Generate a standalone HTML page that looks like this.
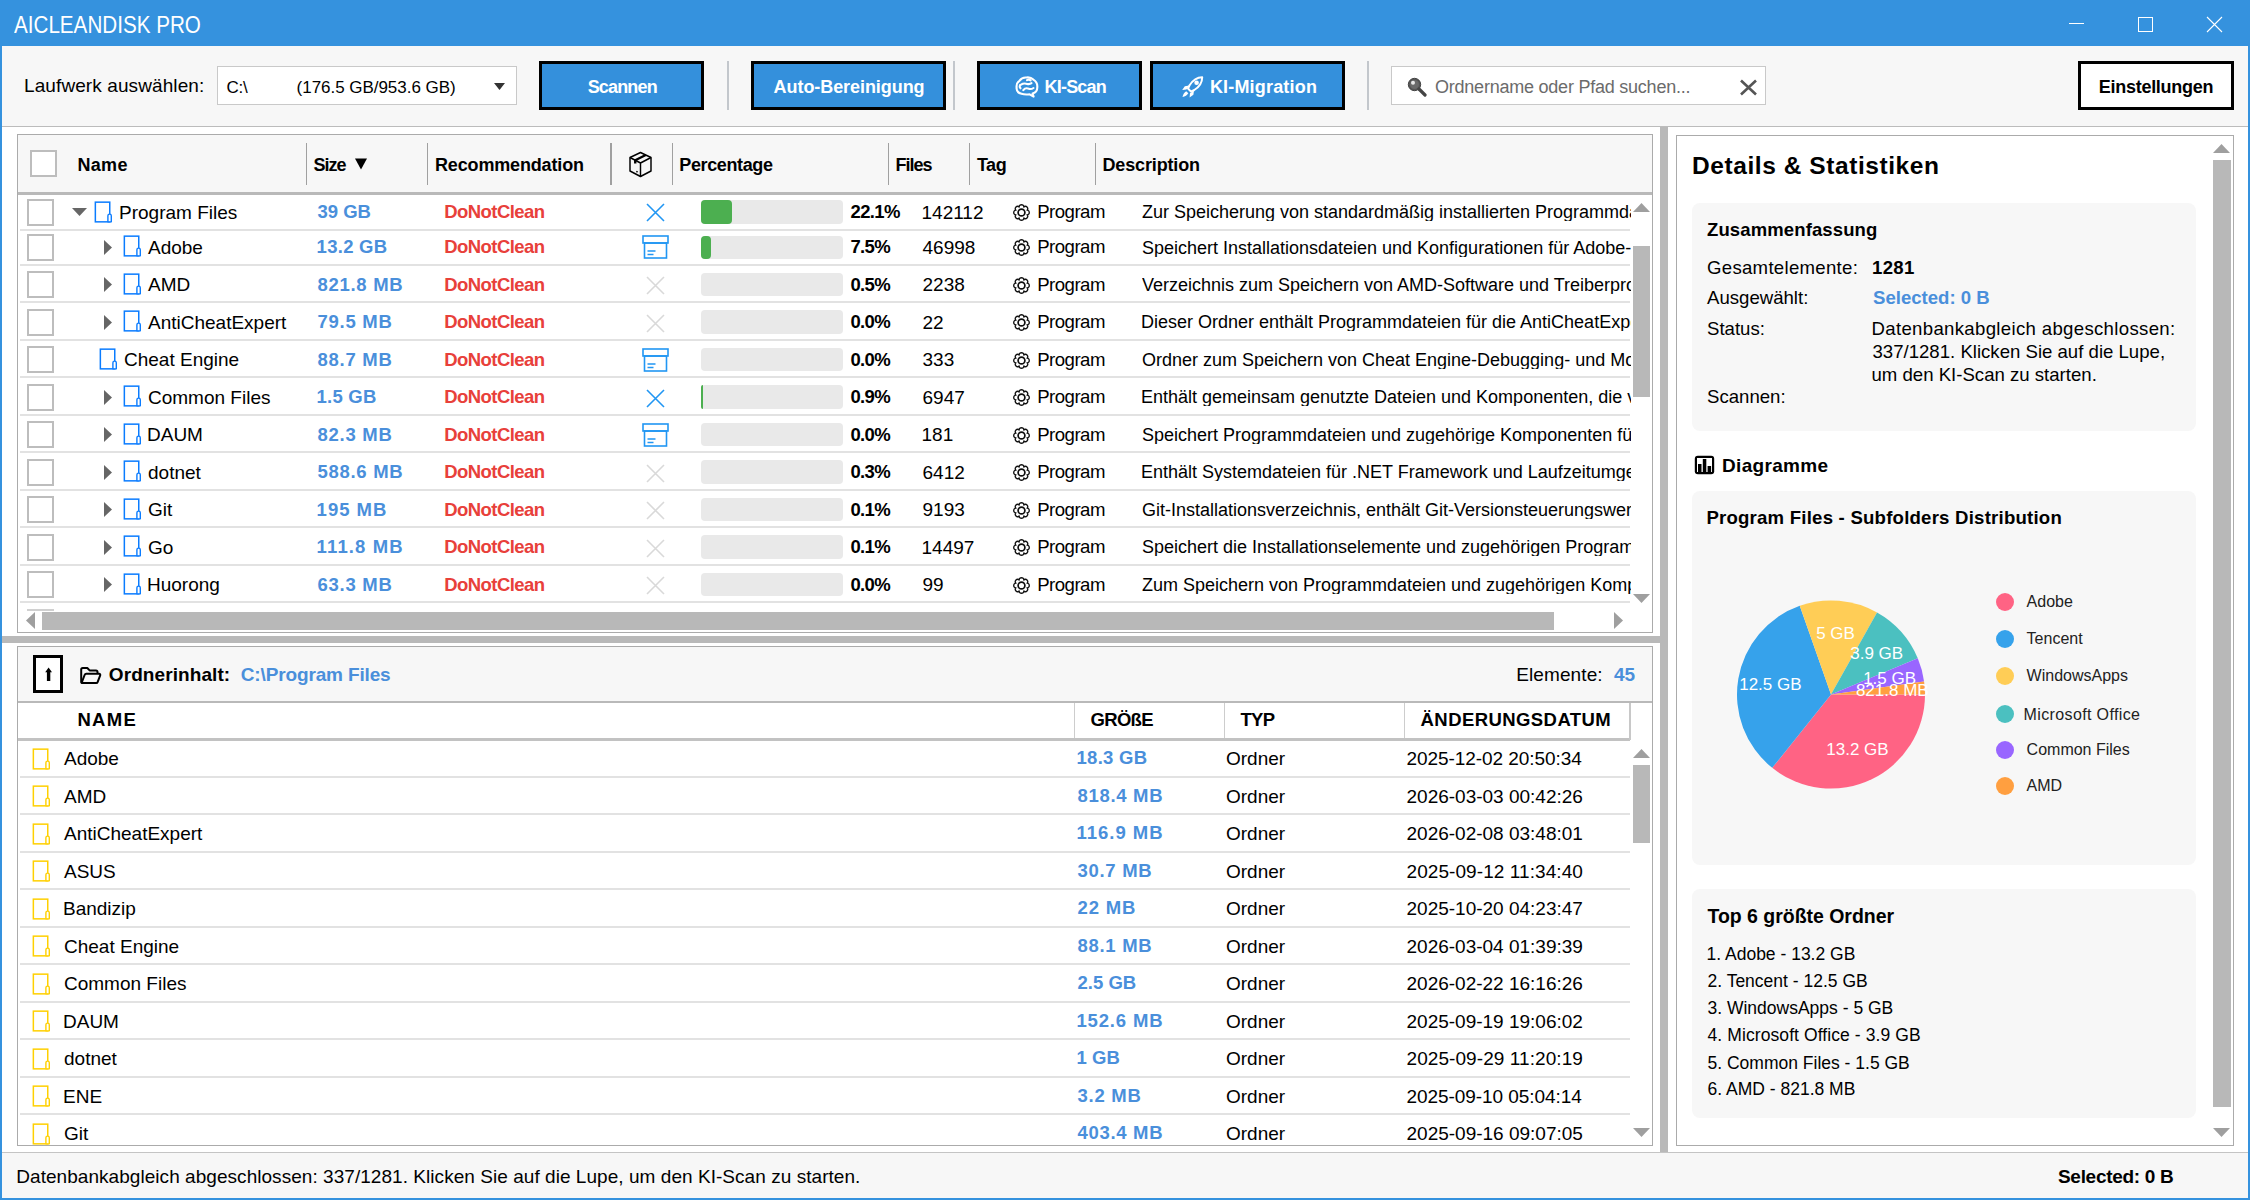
<!DOCTYPE html>
<html><head><meta charset="utf-8"><title>AICLEANDISK PRO</title>
<style>
html,body{margin:0;padding:0;width:2250px;height:1200px;overflow:hidden;background:#fff}
body{position:relative;font-family:"Liberation Sans", sans-serif;}
body>div,body>svg{position:absolute;white-space:pre;}
</style></head><body>
<div style="left:0px;top:0px;width:2250px;height:46px;background:#3592de"></div>
<div style="left:0px;top:46px;width:2px;height:1154px;background:#3592de"></div>
<div style="left:2248px;top:46px;width:2px;height:1154px;background:#3592de"></div>
<div style="left:0px;top:1198px;width:2250px;height:2px;background:#3592de"></div>
<div style="left:14.4px;top:13.92px;font-size:23.5px;line-height:23.5px;color:#fff;transform:scaleX(0.8778);transform-origin:0 0;">AICLEANDISK PRO</div>
<div style="left:2069px;top:23px;width:15px;height:1px;background:#fff"></div>
<div style="left:2138px;top:17px;width:15px;height:15px;border:1px solid #fff;box-sizing:border-box"></div>
<svg style="left:2206px;top:16px;" width="17" height="17" viewBox="0 0 17 17"><path d="M1 1L16 16M16 1L1 16" stroke="#fff" stroke-width="1.1"/></svg>
<div style="left:2px;top:46px;width:2246px;height:80px;background:#f7f7f7"></div>
<div style="left:2px;top:126px;width:2246px;height:1px;background:#bcbcbc"></div>
<div style="left:24px;top:75.68px;font-size:19px;line-height:19px;color:#000;letter-spacing:0.099px;">Laufwerk auswählen:</div>
<div style="left:217px;top:66px;width:300px;height:39px;background:#fff;border:1px solid #c9c9c9;box-sizing:border-box"></div>
<div style="left:226.4px;top:79.04px;font-size:17px;line-height:17px;color:#000;letter-spacing:-0.200px;">C:\</div>
<div style="left:296.6px;top:79.04px;font-size:17px;line-height:17px;color:#000;letter-spacing:-0.035px;">(176.5 GB/953.6 GB)</div>
<svg style="left:494px;top:82.5px;" width="11" height="7" viewBox="0 0 11 7"><path d="M0 0H11L5.5 7Z" fill="#333"/></svg>
<div style="left:539px;top:61px;width:165px;height:49px;background:#3490dc;border:3px solid #000;box-sizing:border-box"></div>
<div style="left:587.7px;top:77.86px;font-size:18px;line-height:18px;font-weight:700;color:#fff;letter-spacing:-0.838px;">Scannen</div>
<div style="left:727px;top:61px;width:2px;height:49px;background:#c3c7cc"></div>
<div style="left:751px;top:61px;width:195px;height:49px;background:#3490dc;border:3px solid #000;box-sizing:border-box"></div>
<div style="left:773.6px;top:77.86px;font-size:18px;line-height:18px;font-weight:700;color:#fff;letter-spacing:-0.066px;">Auto-Bereinigung</div>
<div style="left:953px;top:61px;width:2px;height:49px;background:#c3c7cc"></div>
<div style="left:977px;top:61px;width:165px;height:49px;background:#3490dc;border:3px solid #000;box-sizing:border-box"></div>
<div style="left:1044.5px;top:77.86px;font-size:18px;line-height:18px;font-weight:700;color:#fff;letter-spacing:-0.787px;">KI-Scan</div>
<div style="left:1150px;top:61px;width:195px;height:49px;background:#3490dc;border:3px solid #000;box-sizing:border-box"></div>
<div style="left:1209.9px;top:77.86px;font-size:18px;line-height:18px;font-weight:700;color:#fff;letter-spacing:0.183px;">KI-Migration</div>
<div style="left:1367px;top:61px;width:2px;height:49px;background:#c3c7cc"></div>
<svg style="left:1015px;top:75.5px;" width="24" height="22" viewBox="0 0 24 22"><g fill="none" stroke="#fff" stroke-width="2.1" stroke-linecap="round" stroke-linejoin="round">
<path d="M6.5 17.8C3.2 17 1.3 14.3 1.6 11.2C1.3 8.5 2.6 6 4.6 4.6C6 2.4 8.6 1.3 11.5 1.5C13.8 1.2 16.5 1.8 18.3 3.6C20.8 5 22.5 7.8 22.3 11C22.4 14.2 20.5 16.8 17.6 17.6L18.6 20.6L14.6 18.3C12 18.6 9 18.6 6.5 17.8Z"/>
<path d="M6 8.6C7.6 7.6 10 7.3 12.2 7.9C13.8 8.3 15.2 8.1 16.5 7.2"/>
<path d="M8.3 14.2C9.6 12.5 12 12 13.8 12.7C15.3 13.3 17 13 18.5 12"/>
<path d="M12 4.2C13 3.6 14.6 3.6 15.6 4.3M5.5 12.3C4.6 11.3 4.5 10 5 9"/>
</g></svg>
<svg style="left:1181px;top:75.5px;" width="23" height="22" viewBox="0 0 23 22"><g fill="none" stroke="#fff" stroke-width="2" stroke-linejoin="round">
<path d="M21.2 1.2C16.5 1.3 11.8 4.2 8.6 9.2L7 12.5L10 15.6L13.3 14C18.3 10.8 21.2 6.2 21.2 1.2Z"/>
</g>
<circle cx="15.6" cy="6.8" r="2.3" fill="#fff"/>
<path d="M8.2 9.5L3.8 10.2L1.2 14L5.5 13.6ZM13 14.6L12.4 18.8L8.6 21.4L9 17.2Z" fill="#fff"/>
<path d="M5.2 15.2C3.4 16.2 2 18.6 1.5 21C3.9 20.5 6.3 19.2 7.3 17.3Z" fill="#fff"/></svg>
<div style="left:1391px;top:66px;width:375px;height:39px;background:#fff;border:1px solid #c9c9c9;box-sizing:border-box"></div>
<svg style="left:1407px;top:77px;" width="20" height="20" viewBox="0 0 20 20"><circle cx="7.5" cy="7.5" r="6.2" fill="#555" stroke="#444" stroke-width="1"/>
<circle cx="7.5" cy="7.5" r="4.5" fill="#6a6a6a"/>
<circle cx="6" cy="5.8" r="2" fill="#e8e8e8"/>
<path d="M12 12L18 18" stroke="#444" stroke-width="3.2" stroke-linecap="round"/></svg>
<div style="left:1435px;top:78.36px;font-size:18px;line-height:18px;color:#6b6b6b;letter-spacing:-0.229px;">Ordnername oder Pfad suchen...</div>
<svg style="left:1739px;top:78.5px;" width="19" height="17" viewBox="0 0 19 17"><path d="M2 1.5L17 15.5M17 1.5L2 15.5" stroke="#555" stroke-width="2.6"/></svg>
<div style="left:2078px;top:61px;width:156px;height:49px;background:#fff;border:3px solid #000;box-sizing:border-box"></div>
<div style="left:2098.75px;top:77.86px;font-size:18px;line-height:18px;font-weight:700;color:#000;letter-spacing:-0.272px;">Einstellungen</div>
<div style="left:2px;top:127px;width:2246px;height:1025px;background:#fff"></div>
<div style="left:1660px;top:127px;width:8px;height:1025px;background:#b9b9b9"></div>
<div style="left:2px;top:636px;width:1658px;height:7px;background:#b9b9b9"></div>
<div style="left:17px;top:134px;width:1636px;height:499px;border:1px solid #ababab;box-sizing:border-box;background:#fff"></div>
<div style="left:18px;top:135px;width:1634px;height:57px;background:#f7f7f7"></div>
<div style="left:18px;top:192px;width:1634px;height:3px;background:#b9b9b9"></div>
<div style="left:30px;top:150px;width:27px;height:27px;background:#fff;border:2px solid #bdbdbd;box-sizing:border-box"></div>
<div style="left:77.4px;top:156.11px;font-size:18px;line-height:18px;font-weight:700;color:#000;letter-spacing:0.328px;">Name</div>
<div style="left:313.5px;top:156.11px;font-size:18px;line-height:18px;font-weight:700;color:#000;letter-spacing:-1.002px;">Size</div>
<svg style="left:355px;top:158px;" width="12" height="12" viewBox="0 0 12 12"><path d="M0 0.5H12L6 11.5Z" fill="#000"/></svg>
<div style="left:435px;top:156.11px;font-size:18px;line-height:18px;font-weight:700;color:#000;letter-spacing:-0.156px;">Recommendation</div>
<div style="left:679.3px;top:156.11px;font-size:18px;line-height:18px;font-weight:700;color:#000;letter-spacing:-0.371px;">Percentage</div>
<div style="left:895.5px;top:156.11px;font-size:18px;line-height:18px;font-weight:700;color:#000;letter-spacing:-1.002px;">Files</div>
<div style="left:976.9px;top:156.11px;font-size:18px;line-height:18px;font-weight:700;color:#000;letter-spacing:-0.435px;">Tag</div>
<div style="left:1102.5px;top:156.11px;font-size:18px;line-height:18px;font-weight:700;color:#000;letter-spacing:-0.152px;">Description</div>
<div style="left:305.5px;top:143px;width:1.5px;height:42px;background:#a0a0a0"></div>
<div style="left:426.5px;top:143px;width:1.5px;height:42px;background:#a0a0a0"></div>
<div style="left:610px;top:143px;width:1.5px;height:42px;background:#a0a0a0"></div>
<div style="left:671.5px;top:143px;width:1.5px;height:42px;background:#a0a0a0"></div>
<div style="left:887.5px;top:143px;width:1.5px;height:42px;background:#a0a0a0"></div>
<div style="left:968.5px;top:143px;width:1.5px;height:42px;background:#a0a0a0"></div>
<div style="left:1094.5px;top:143px;width:1.5px;height:42px;background:#a0a0a0"></div>
<svg style="left:628px;top:151px;" width="25" height="27" viewBox="0 0 25 27"><g fill="none" stroke="#000" stroke-width="1.45" stroke-linejoin="round">
<path d="M12.5 1.5L23 6.5V20L12.5 25.5L2 20V6.5Z"/>
<path d="M2 6.5L12.5 12L23 6.5M12.5 12V25.5"/>
<path d="M17.75 4L7.25 9.25V12.5" stroke-width="2.4"/>
</g><path d="M8.3 20.3L9.6 21" stroke="#000" stroke-width="1.5"/></svg>
<div style="left:27px;top:198.5px;width:27px;height:27px;background:#fff;border:2px solid #bdbdbd;box-sizing:border-box"></div>
<svg style="left:72px;top:208px;" width="15" height="8" viewBox="0 0 15 8"><path d="M0 0H15L7.5 8Z" fill="#666"/></svg>
<svg style="left:94px;top:200.5px;" width="18" height="22" viewBox="0 0 18 22"><rect x="1.35" y="1.15" width="14.4" height="19.7" fill="none" stroke="#0a7cff" stroke-width="1.5"/>
<path d="M13.9 20.85V14.7C13.9 13.7 14.5 13.1 15.6 13.1C16.7 13.1 17.3 13.7 17.3 14.7V20.85Z" fill="#fff" stroke="#0a7cff" stroke-width="1.4" stroke-linejoin="round"/></svg>
<div style="left:119px;top:202.88px;font-size:19px;line-height:19px;color:#000;">Program Files</div>
<div style="left:317.6px;top:203.12px;font-size:18.5px;line-height:18.5px;font-weight:700;color:#4a8fdb;letter-spacing:-0.052px;">39 GB</div>
<div style="left:444.2px;top:203.12px;font-size:18.5px;line-height:18.5px;font-weight:700;color:#e8403a;letter-spacing:-0.551px;">DoNotClean</div>
<svg style="left:646px;top:203.4px;" width="19" height="19" viewBox="0 0 19 19"><path d="M1 1L18 18M18 1L1 18" stroke="#2196f3" stroke-width="1.6"/></svg>
<div style="left:701.2px;top:200.3px;width:141.6px;height:23.5px;background:#e9e9e9;border-radius:4px"></div>
<div style="left:701.2px;top:200.3px;width:30.7px;height:23.5px;background:#4caf50;border-radius:4px"></div>
<div style="left:850.5px;top:203.12px;font-size:18.5px;line-height:18.5px;font-weight:700;color:#000;letter-spacing:-0.652px;">22.1%</div>
<div style="left:921.5px;top:202.88px;font-size:19px;line-height:19px;color:#000;">142112</div>
<svg style="left:1011.5px;top:203.2px;" width="19" height="19" viewBox="0 0 19 19"><g fill="none" stroke="#111" stroke-width="1.35" stroke-linejoin="round">
<path d="M7.20 3.96C6.90 0.99 12.10 0.99 11.80 3.96C13.68 1.64 17.36 5.32 15.04 7.20C18.01 6.90 18.01 12.10 15.04 11.80C17.36 13.68 13.68 17.36 11.80 15.04C12.10 18.01 6.90 18.01 7.20 15.04C5.32 17.36 1.64 13.68 3.96 11.80C0.99 12.10 0.99 6.90 3.96 7.20C1.64 5.32 5.32 1.64 7.20 3.96Z"/>
<circle cx="9.5" cy="9.5" r="3.4" stroke-width="1.7"/></g></svg>
<div style="left:1037.2px;top:203.07px;font-size:18.6px;line-height:18.6px;color:#000;letter-spacing:-0.518px;">Program</div>
<div style="left:1141.9px;top:203.36px;font-size:18px;line-height:18px;color:#000;width:489.1px;overflow:hidden;">Zur Speicherung von standardmäßig installierten Programmdateien und Komponenten</div>
<div style="left:27px;top:233.7px;width:27px;height:27px;background:#fff;border:2px solid #bdbdbd;box-sizing:border-box"></div>
<svg style="left:104px;top:239.7px;" width="8" height="15" viewBox="0 0 8 15"><path d="M0 0L8 7.5L0 15Z" fill="#666"/></svg>
<svg style="left:122.5px;top:235.2px;" width="18" height="22" viewBox="0 0 18 22"><rect x="1.35" y="1.15" width="14.4" height="19.7" fill="none" stroke="#0a7cff" stroke-width="1.5"/>
<path d="M13.9 20.85V14.7C13.9 13.7 14.5 13.1 15.6 13.1C16.7 13.1 17.3 13.7 17.3 14.7V20.85Z" fill="#fff" stroke="#0a7cff" stroke-width="1.4" stroke-linejoin="round"/></svg>
<div style="left:148px;top:238.08px;font-size:19px;line-height:19px;color:#000;">Adobe</div>
<div style="left:316.6px;top:238.32px;font-size:18.5px;line-height:18.5px;font-weight:700;color:#4a8fdb;letter-spacing:0.277px;">13.2 GB</div>
<div style="left:444.2px;top:238.32px;font-size:18.5px;line-height:18.5px;font-weight:700;color:#e8403a;letter-spacing:-0.551px;">DoNotClean</div>
<svg style="left:642px;top:235.2px;" width="27" height="24" viewBox="0 0 27 24"><g fill="none" stroke="#2196f3" stroke-width="1.6">
<rect x="1" y="1" width="25" height="7"/><rect x="2.5" y="8" width="22" height="15"/></g>
<path d="M5.5 16H13.5M5.5 19.5H11.5" stroke="#2196f3" stroke-width="1.6"/></svg>
<div style="left:701.2px;top:235.5px;width:141.6px;height:23.5px;background:#e9e9e9;border-radius:4px"></div>
<div style="left:701.2px;top:235.5px;width:9.5px;height:23.5px;background:#4caf50;border-radius:4px"></div>
<div style="left:850.5px;top:238.32px;font-size:18.5px;line-height:18.5px;font-weight:700;color:#000;letter-spacing:-0.673px;">7.5%</div>
<div style="left:922.5px;top:238.08px;font-size:19px;line-height:19px;color:#000;">46998</div>
<svg style="left:1011.5px;top:238.4px;" width="19" height="19" viewBox="0 0 19 19"><g fill="none" stroke="#111" stroke-width="1.35" stroke-linejoin="round">
<path d="M7.20 3.96C6.90 0.99 12.10 0.99 11.80 3.96C13.68 1.64 17.36 5.32 15.04 7.20C18.01 6.90 18.01 12.10 15.04 11.80C17.36 13.68 13.68 17.36 11.80 15.04C12.10 18.01 6.90 18.01 7.20 15.04C5.32 17.36 1.64 13.68 3.96 11.80C0.99 12.10 0.99 6.90 3.96 7.20C1.64 5.32 5.32 1.64 7.20 3.96Z"/>
<circle cx="9.5" cy="9.5" r="3.4" stroke-width="1.7"/></g></svg>
<div style="left:1037.2px;top:238.27px;font-size:18.6px;line-height:18.6px;color:#000;letter-spacing:-0.518px;">Program</div>
<div style="left:1141.9px;top:238.56px;font-size:18px;line-height:18px;color:#000;width:489.1px;overflow:hidden;">Speichert Installationsdateien und Konfigurationen für Adobe-Software und Anwendungen</div>
<div style="left:27px;top:271.1px;width:27px;height:27px;background:#fff;border:2px solid #bdbdbd;box-sizing:border-box"></div>
<svg style="left:104px;top:277.1px;" width="8" height="15" viewBox="0 0 8 15"><path d="M0 0L8 7.5L0 15Z" fill="#666"/></svg>
<svg style="left:122.5px;top:272.6px;" width="18" height="22" viewBox="0 0 18 22"><rect x="1.35" y="1.15" width="14.4" height="19.7" fill="none" stroke="#0a7cff" stroke-width="1.5"/>
<path d="M13.9 20.85V14.7C13.9 13.7 14.5 13.1 15.6 13.1C16.7 13.1 17.3 13.7 17.3 14.7V20.85Z" fill="#fff" stroke="#0a7cff" stroke-width="1.4" stroke-linejoin="round"/></svg>
<div style="left:148px;top:275.48px;font-size:19px;line-height:19px;color:#000;">AMD</div>
<div style="left:317.6px;top:275.72px;font-size:18.5px;line-height:18.5px;font-weight:700;color:#4a8fdb;letter-spacing:0.693px;">821.8 MB</div>
<div style="left:444.2px;top:275.72px;font-size:18.5px;line-height:18.5px;font-weight:700;color:#e8403a;letter-spacing:-0.551px;">DoNotClean</div>
<svg style="left:646px;top:276px;" width="19" height="19" viewBox="0 0 19 19"><path d="M1 1L18 18M18 1L1 18" stroke="#d9d9d9" stroke-width="1.6"/></svg>
<div style="left:701.2px;top:272.9px;width:141.6px;height:23.5px;background:#e9e9e9;border-radius:4px"></div>
<div style="left:850.5px;top:275.72px;font-size:18.5px;line-height:18.5px;font-weight:700;color:#000;letter-spacing:-0.673px;">0.5%</div>
<div style="left:922.5px;top:275.48px;font-size:19px;line-height:19px;color:#000;">2238</div>
<svg style="left:1011.5px;top:275.8px;" width="19" height="19" viewBox="0 0 19 19"><g fill="none" stroke="#111" stroke-width="1.35" stroke-linejoin="round">
<path d="M7.20 3.96C6.90 0.99 12.10 0.99 11.80 3.96C13.68 1.64 17.36 5.32 15.04 7.20C18.01 6.90 18.01 12.10 15.04 11.80C17.36 13.68 13.68 17.36 11.80 15.04C12.10 18.01 6.90 18.01 7.20 15.04C5.32 17.36 1.64 13.68 3.96 11.80C0.99 12.10 0.99 6.90 3.96 7.20C1.64 5.32 5.32 1.64 7.20 3.96Z"/>
<circle cx="9.5" cy="9.5" r="3.4" stroke-width="1.7"/></g></svg>
<div style="left:1037.2px;top:275.67px;font-size:18.6px;line-height:18.6px;color:#000;letter-spacing:-0.518px;">Program</div>
<div style="left:1141.9px;top:275.96px;font-size:18px;line-height:18px;color:#000;width:489.1px;overflow:hidden;">Verzeichnis zum Speichern von AMD-Software und Treiberprogrammen</div>
<div style="left:27px;top:308.6px;width:27px;height:27px;background:#fff;border:2px solid #bdbdbd;box-sizing:border-box"></div>
<svg style="left:104px;top:314.6px;" width="8" height="15" viewBox="0 0 8 15"><path d="M0 0L8 7.5L0 15Z" fill="#666"/></svg>
<svg style="left:122.5px;top:310.1px;" width="18" height="22" viewBox="0 0 18 22"><rect x="1.35" y="1.15" width="14.4" height="19.7" fill="none" stroke="#0a7cff" stroke-width="1.5"/>
<path d="M13.9 20.85V14.7C13.9 13.7 14.5 13.1 15.6 13.1C16.7 13.1 17.3 13.7 17.3 14.7V20.85Z" fill="#fff" stroke="#0a7cff" stroke-width="1.4" stroke-linejoin="round"/></svg>
<div style="left:148px;top:312.98px;font-size:19px;line-height:19px;color:#000;">AntiCheatExpert</div>
<div style="left:317.6px;top:313.22px;font-size:18.5px;line-height:18.5px;font-weight:700;color:#4a8fdb;letter-spacing:0.707px;">79.5 MB</div>
<div style="left:444.2px;top:313.22px;font-size:18.5px;line-height:18.5px;font-weight:700;color:#e8403a;letter-spacing:-0.551px;">DoNotClean</div>
<svg style="left:646px;top:313.5px;" width="19" height="19" viewBox="0 0 19 19"><path d="M1 1L18 18M18 1L1 18" stroke="#d9d9d9" stroke-width="1.6"/></svg>
<div style="left:701.2px;top:310.4px;width:141.6px;height:23.5px;background:#e9e9e9;border-radius:4px"></div>
<div style="left:850.5px;top:313.22px;font-size:18.5px;line-height:18.5px;font-weight:700;color:#000;letter-spacing:-0.673px;">0.0%</div>
<div style="left:922.5px;top:312.98px;font-size:19px;line-height:19px;color:#000;">22</div>
<svg style="left:1011.5px;top:313.3px;" width="19" height="19" viewBox="0 0 19 19"><g fill="none" stroke="#111" stroke-width="1.35" stroke-linejoin="round">
<path d="M7.20 3.96C6.90 0.99 12.10 0.99 11.80 3.96C13.68 1.64 17.36 5.32 15.04 7.20C18.01 6.90 18.01 12.10 15.04 11.80C17.36 13.68 13.68 17.36 11.80 15.04C12.10 18.01 6.90 18.01 7.20 15.04C5.32 17.36 1.64 13.68 3.96 11.80C0.99 12.10 0.99 6.90 3.96 7.20C1.64 5.32 5.32 1.64 7.20 3.96Z"/>
<circle cx="9.5" cy="9.5" r="3.4" stroke-width="1.7"/></g></svg>
<div style="left:1037.2px;top:313.17px;font-size:18.6px;line-height:18.6px;color:#000;letter-spacing:-0.518px;">Program</div>
<div style="left:1140.9px;top:313.46px;font-size:18px;line-height:18px;color:#000;width:490.1px;overflow:hidden;">Dieser Ordner enthält Programmdateien für die AntiCheatExpert-Software</div>
<div style="left:27px;top:346.1px;width:27px;height:27px;background:#fff;border:2px solid #bdbdbd;box-sizing:border-box"></div>
<svg style="left:98.5px;top:347.6px;" width="18" height="22" viewBox="0 0 18 22"><rect x="1.35" y="1.15" width="14.4" height="19.7" fill="none" stroke="#0a7cff" stroke-width="1.5"/>
<path d="M13.9 20.85V14.7C13.9 13.7 14.5 13.1 15.6 13.1C16.7 13.1 17.3 13.7 17.3 14.7V20.85Z" fill="#fff" stroke="#0a7cff" stroke-width="1.4" stroke-linejoin="round"/></svg>
<div style="left:124px;top:350.48px;font-size:19px;line-height:19px;color:#000;">Cheat Engine</div>
<div style="left:317.6px;top:350.72px;font-size:18.5px;line-height:18.5px;font-weight:700;color:#4a8fdb;letter-spacing:0.707px;">88.7 MB</div>
<div style="left:444.2px;top:350.72px;font-size:18.5px;line-height:18.5px;font-weight:700;color:#e8403a;letter-spacing:-0.551px;">DoNotClean</div>
<svg style="left:642px;top:347.6px;" width="27" height="24" viewBox="0 0 27 24"><g fill="none" stroke="#2196f3" stroke-width="1.6">
<rect x="1" y="1" width="25" height="7"/><rect x="2.5" y="8" width="22" height="15"/></g>
<path d="M5.5 16H13.5M5.5 19.5H11.5" stroke="#2196f3" stroke-width="1.6"/></svg>
<div style="left:701.2px;top:347.9px;width:141.6px;height:23.5px;background:#e9e9e9;border-radius:4px"></div>
<div style="left:850.5px;top:350.72px;font-size:18.5px;line-height:18.5px;font-weight:700;color:#000;letter-spacing:-0.673px;">0.0%</div>
<div style="left:922.5px;top:350.48px;font-size:19px;line-height:19px;color:#000;">333</div>
<svg style="left:1011.5px;top:350.8px;" width="19" height="19" viewBox="0 0 19 19"><g fill="none" stroke="#111" stroke-width="1.35" stroke-linejoin="round">
<path d="M7.20 3.96C6.90 0.99 12.10 0.99 11.80 3.96C13.68 1.64 17.36 5.32 15.04 7.20C18.01 6.90 18.01 12.10 15.04 11.80C17.36 13.68 13.68 17.36 11.80 15.04C12.10 18.01 6.90 18.01 7.20 15.04C5.32 17.36 1.64 13.68 3.96 11.80C0.99 12.10 0.99 6.90 3.96 7.20C1.64 5.32 5.32 1.64 7.20 3.96Z"/>
<circle cx="9.5" cy="9.5" r="3.4" stroke-width="1.7"/></g></svg>
<div style="left:1037.2px;top:350.67px;font-size:18.6px;line-height:18.6px;color:#000;letter-spacing:-0.518px;">Program</div>
<div style="left:1141.9px;top:350.96px;font-size:18px;line-height:18px;color:#000;width:489.1px;overflow:hidden;">Ordner zum Speichern von Cheat Engine-Debugging- und Modifikationswerkzeugen</div>
<div style="left:27px;top:383.6px;width:27px;height:27px;background:#fff;border:2px solid #bdbdbd;box-sizing:border-box"></div>
<svg style="left:104px;top:389.6px;" width="8" height="15" viewBox="0 0 8 15"><path d="M0 0L8 7.5L0 15Z" fill="#666"/></svg>
<svg style="left:122.5px;top:385.1px;" width="18" height="22" viewBox="0 0 18 22"><rect x="1.35" y="1.15" width="14.4" height="19.7" fill="none" stroke="#0a7cff" stroke-width="1.5"/>
<path d="M13.9 20.85V14.7C13.9 13.7 14.5 13.1 15.6 13.1C16.7 13.1 17.3 13.7 17.3 14.7V20.85Z" fill="#fff" stroke="#0a7cff" stroke-width="1.4" stroke-linejoin="round"/></svg>
<div style="left:148px;top:387.98px;font-size:19px;line-height:19px;color:#000;">Common Files</div>
<div style="left:316.6px;top:388.22px;font-size:18.5px;line-height:18.5px;font-weight:700;color:#4a8fdb;letter-spacing:0.211px;">1.5 GB</div>
<div style="left:444.2px;top:388.22px;font-size:18.5px;line-height:18.5px;font-weight:700;color:#e8403a;letter-spacing:-0.551px;">DoNotClean</div>
<svg style="left:646px;top:388.5px;" width="19" height="19" viewBox="0 0 19 19"><path d="M1 1L18 18M18 1L1 18" stroke="#2196f3" stroke-width="1.6"/></svg>
<div style="left:701.2px;top:385.4px;width:141.6px;height:23.5px;background:#e9e9e9;border-radius:4px"></div>
<div style="left:701.2px;top:385.4px;width:1.5px;height:23.5px;background:#4caf50;border-radius:3px 0 0 3px"></div>
<div style="left:850.5px;top:388.22px;font-size:18.5px;line-height:18.5px;font-weight:700;color:#000;letter-spacing:-0.673px;">0.9%</div>
<div style="left:922.5px;top:387.98px;font-size:19px;line-height:19px;color:#000;">6947</div>
<svg style="left:1011.5px;top:388.3px;" width="19" height="19" viewBox="0 0 19 19"><g fill="none" stroke="#111" stroke-width="1.35" stroke-linejoin="round">
<path d="M7.20 3.96C6.90 0.99 12.10 0.99 11.80 3.96C13.68 1.64 17.36 5.32 15.04 7.20C18.01 6.90 18.01 12.10 15.04 11.80C17.36 13.68 13.68 17.36 11.80 15.04C12.10 18.01 6.90 18.01 7.20 15.04C5.32 17.36 1.64 13.68 3.96 11.80C0.99 12.10 0.99 6.90 3.96 7.20C1.64 5.32 5.32 1.64 7.20 3.96Z"/>
<circle cx="9.5" cy="9.5" r="3.4" stroke-width="1.7"/></g></svg>
<div style="left:1037.2px;top:388.17px;font-size:18.6px;line-height:18.6px;color:#000;letter-spacing:-0.518px;">Program</div>
<div style="left:1140.9px;top:388.46px;font-size:18px;line-height:18px;color:#000;width:490.1px;overflow:hidden;">Enthält gemeinsam genutzte Dateien und Komponenten, die von mehreren Programmen</div>
<div style="left:27px;top:421.1px;width:27px;height:27px;background:#fff;border:2px solid #bdbdbd;box-sizing:border-box"></div>
<svg style="left:104px;top:427.1px;" width="8" height="15" viewBox="0 0 8 15"><path d="M0 0L8 7.5L0 15Z" fill="#666"/></svg>
<svg style="left:122.5px;top:422.6px;" width="18" height="22" viewBox="0 0 18 22"><rect x="1.35" y="1.15" width="14.4" height="19.7" fill="none" stroke="#0a7cff" stroke-width="1.5"/>
<path d="M13.9 20.85V14.7C13.9 13.7 14.5 13.1 15.6 13.1C16.7 13.1 17.3 13.7 17.3 14.7V20.85Z" fill="#fff" stroke="#0a7cff" stroke-width="1.4" stroke-linejoin="round"/></svg>
<div style="left:147px;top:425.48px;font-size:19px;line-height:19px;color:#000;">DAUM</div>
<div style="left:317.6px;top:425.72px;font-size:18.5px;line-height:18.5px;font-weight:700;color:#4a8fdb;letter-spacing:0.707px;">82.3 MB</div>
<div style="left:444.2px;top:425.72px;font-size:18.5px;line-height:18.5px;font-weight:700;color:#e8403a;letter-spacing:-0.551px;">DoNotClean</div>
<svg style="left:642px;top:422.6px;" width="27" height="24" viewBox="0 0 27 24"><g fill="none" stroke="#2196f3" stroke-width="1.6">
<rect x="1" y="1" width="25" height="7"/><rect x="2.5" y="8" width="22" height="15"/></g>
<path d="M5.5 16H13.5M5.5 19.5H11.5" stroke="#2196f3" stroke-width="1.6"/></svg>
<div style="left:701.2px;top:422.9px;width:141.6px;height:23.5px;background:#e9e9e9;border-radius:4px"></div>
<div style="left:850.5px;top:425.72px;font-size:18.5px;line-height:18.5px;font-weight:700;color:#000;letter-spacing:-0.673px;">0.0%</div>
<div style="left:921.5px;top:425.48px;font-size:19px;line-height:19px;color:#000;">181</div>
<svg style="left:1011.5px;top:425.8px;" width="19" height="19" viewBox="0 0 19 19"><g fill="none" stroke="#111" stroke-width="1.35" stroke-linejoin="round">
<path d="M7.20 3.96C6.90 0.99 12.10 0.99 11.80 3.96C13.68 1.64 17.36 5.32 15.04 7.20C18.01 6.90 18.01 12.10 15.04 11.80C17.36 13.68 13.68 17.36 11.80 15.04C12.10 18.01 6.90 18.01 7.20 15.04C5.32 17.36 1.64 13.68 3.96 11.80C0.99 12.10 0.99 6.90 3.96 7.20C1.64 5.32 5.32 1.64 7.20 3.96Z"/>
<circle cx="9.5" cy="9.5" r="3.4" stroke-width="1.7"/></g></svg>
<div style="left:1037.2px;top:425.67px;font-size:18.6px;line-height:18.6px;color:#000;letter-spacing:-0.518px;">Program</div>
<div style="left:1141.9px;top:425.96px;font-size:18px;line-height:18px;color:#000;width:489.1px;overflow:hidden;">Speichert Programmdateien und zugehörige Komponenten für DAUM-Software</div>
<div style="left:27px;top:458.6px;width:27px;height:27px;background:#fff;border:2px solid #bdbdbd;box-sizing:border-box"></div>
<svg style="left:104px;top:464.6px;" width="8" height="15" viewBox="0 0 8 15"><path d="M0 0L8 7.5L0 15Z" fill="#666"/></svg>
<svg style="left:122.5px;top:460.1px;" width="18" height="22" viewBox="0 0 18 22"><rect x="1.35" y="1.15" width="14.4" height="19.7" fill="none" stroke="#0a7cff" stroke-width="1.5"/>
<path d="M13.9 20.85V14.7C13.9 13.7 14.5 13.1 15.6 13.1C16.7 13.1 17.3 13.7 17.3 14.7V20.85Z" fill="#fff" stroke="#0a7cff" stroke-width="1.4" stroke-linejoin="round"/></svg>
<div style="left:148px;top:462.98px;font-size:19px;line-height:19px;color:#000;">dotnet</div>
<div style="left:317.6px;top:463.22px;font-size:18.5px;line-height:18.5px;font-weight:700;color:#4a8fdb;letter-spacing:0.693px;">588.6 MB</div>
<div style="left:444.2px;top:463.22px;font-size:18.5px;line-height:18.5px;font-weight:700;color:#e8403a;letter-spacing:-0.551px;">DoNotClean</div>
<svg style="left:646px;top:463.5px;" width="19" height="19" viewBox="0 0 19 19"><path d="M1 1L18 18M18 1L1 18" stroke="#d9d9d9" stroke-width="1.6"/></svg>
<div style="left:701.2px;top:460.4px;width:141.6px;height:23.5px;background:#e9e9e9;border-radius:4px"></div>
<div style="left:850.5px;top:463.22px;font-size:18.5px;line-height:18.5px;font-weight:700;color:#000;letter-spacing:-0.673px;">0.3%</div>
<div style="left:922.5px;top:462.98px;font-size:19px;line-height:19px;color:#000;">6412</div>
<svg style="left:1011.5px;top:463.3px;" width="19" height="19" viewBox="0 0 19 19"><g fill="none" stroke="#111" stroke-width="1.35" stroke-linejoin="round">
<path d="M7.20 3.96C6.90 0.99 12.10 0.99 11.80 3.96C13.68 1.64 17.36 5.32 15.04 7.20C18.01 6.90 18.01 12.10 15.04 11.80C17.36 13.68 13.68 17.36 11.80 15.04C12.10 18.01 6.90 18.01 7.20 15.04C5.32 17.36 1.64 13.68 3.96 11.80C0.99 12.10 0.99 6.90 3.96 7.20C1.64 5.32 5.32 1.64 7.20 3.96Z"/>
<circle cx="9.5" cy="9.5" r="3.4" stroke-width="1.7"/></g></svg>
<div style="left:1037.2px;top:463.17px;font-size:18.6px;line-height:18.6px;color:#000;letter-spacing:-0.518px;">Program</div>
<div style="left:1140.9px;top:463.46px;font-size:18px;line-height:18px;color:#000;width:490.1px;overflow:hidden;">Enthält Systemdateien für .NET Framework und Laufzeitumgebungen</div>
<div style="left:27px;top:496.1px;width:27px;height:27px;background:#fff;border:2px solid #bdbdbd;box-sizing:border-box"></div>
<svg style="left:104px;top:502.1px;" width="8" height="15" viewBox="0 0 8 15"><path d="M0 0L8 7.5L0 15Z" fill="#666"/></svg>
<svg style="left:122.5px;top:497.6px;" width="18" height="22" viewBox="0 0 18 22"><rect x="1.35" y="1.15" width="14.4" height="19.7" fill="none" stroke="#0a7cff" stroke-width="1.5"/>
<path d="M13.9 20.85V14.7C13.9 13.7 14.5 13.1 15.6 13.1C16.7 13.1 17.3 13.7 17.3 14.7V20.85Z" fill="#fff" stroke="#0a7cff" stroke-width="1.4" stroke-linejoin="round"/></svg>
<div style="left:148px;top:500.48px;font-size:19px;line-height:19px;color:#000;">Git</div>
<div style="left:316.6px;top:500.72px;font-size:18.5px;line-height:18.5px;font-weight:700;color:#4a8fdb;letter-spacing:0.997px;">195 MB</div>
<div style="left:444.2px;top:500.72px;font-size:18.5px;line-height:18.5px;font-weight:700;color:#e8403a;letter-spacing:-0.551px;">DoNotClean</div>
<svg style="left:646px;top:501px;" width="19" height="19" viewBox="0 0 19 19"><path d="M1 1L18 18M18 1L1 18" stroke="#d9d9d9" stroke-width="1.6"/></svg>
<div style="left:701.2px;top:497.9px;width:141.6px;height:23.5px;background:#e9e9e9;border-radius:4px"></div>
<div style="left:850.5px;top:500.72px;font-size:18.5px;line-height:18.5px;font-weight:700;color:#000;letter-spacing:-0.673px;">0.1%</div>
<div style="left:922.5px;top:500.48px;font-size:19px;line-height:19px;color:#000;">9193</div>
<svg style="left:1011.5px;top:500.8px;" width="19" height="19" viewBox="0 0 19 19"><g fill="none" stroke="#111" stroke-width="1.35" stroke-linejoin="round">
<path d="M7.20 3.96C6.90 0.99 12.10 0.99 11.80 3.96C13.68 1.64 17.36 5.32 15.04 7.20C18.01 6.90 18.01 12.10 15.04 11.80C17.36 13.68 13.68 17.36 11.80 15.04C12.10 18.01 6.90 18.01 7.20 15.04C5.32 17.36 1.64 13.68 3.96 11.80C0.99 12.10 0.99 6.90 3.96 7.20C1.64 5.32 5.32 1.64 7.20 3.96Z"/>
<circle cx="9.5" cy="9.5" r="3.4" stroke-width="1.7"/></g></svg>
<div style="left:1037.2px;top:500.67px;font-size:18.6px;line-height:18.6px;color:#000;letter-spacing:-0.518px;">Program</div>
<div style="left:1141.9px;top:500.96px;font-size:18px;line-height:18px;color:#000;width:489.1px;overflow:hidden;">Git-Installationsverzeichnis, enthält Git-Versionsteuerungswerkzeuge</div>
<div style="left:27px;top:533.6px;width:27px;height:27px;background:#fff;border:2px solid #bdbdbd;box-sizing:border-box"></div>
<svg style="left:104px;top:539.6px;" width="8" height="15" viewBox="0 0 8 15"><path d="M0 0L8 7.5L0 15Z" fill="#666"/></svg>
<svg style="left:122.5px;top:535.1px;" width="18" height="22" viewBox="0 0 18 22"><rect x="1.35" y="1.15" width="14.4" height="19.7" fill="none" stroke="#0a7cff" stroke-width="1.5"/>
<path d="M13.9 20.85V14.7C13.9 13.7 14.5 13.1 15.6 13.1C16.7 13.1 17.3 13.7 17.3 14.7V20.85Z" fill="#fff" stroke="#0a7cff" stroke-width="1.4" stroke-linejoin="round"/></svg>
<div style="left:148px;top:537.98px;font-size:19px;line-height:19px;color:#000;">Go</div>
<div style="left:316.6px;top:538.22px;font-size:18.5px;line-height:18.5px;font-weight:700;color:#4a8fdb;letter-spacing:1.128px;">111.8 MB</div>
<div style="left:444.2px;top:538.22px;font-size:18.5px;line-height:18.5px;font-weight:700;color:#e8403a;letter-spacing:-0.551px;">DoNotClean</div>
<svg style="left:646px;top:538.5px;" width="19" height="19" viewBox="0 0 19 19"><path d="M1 1L18 18M18 1L1 18" stroke="#d9d9d9" stroke-width="1.6"/></svg>
<div style="left:701.2px;top:535.4px;width:141.6px;height:23.5px;background:#e9e9e9;border-radius:4px"></div>
<div style="left:850.5px;top:538.22px;font-size:18.5px;line-height:18.5px;font-weight:700;color:#000;letter-spacing:-0.673px;">0.1%</div>
<div style="left:921.5px;top:537.98px;font-size:19px;line-height:19px;color:#000;">14497</div>
<svg style="left:1011.5px;top:538.3px;" width="19" height="19" viewBox="0 0 19 19"><g fill="none" stroke="#111" stroke-width="1.35" stroke-linejoin="round">
<path d="M7.20 3.96C6.90 0.99 12.10 0.99 11.80 3.96C13.68 1.64 17.36 5.32 15.04 7.20C18.01 6.90 18.01 12.10 15.04 11.80C17.36 13.68 13.68 17.36 11.80 15.04C12.10 18.01 6.90 18.01 7.20 15.04C5.32 17.36 1.64 13.68 3.96 11.80C0.99 12.10 0.99 6.90 3.96 7.20C1.64 5.32 5.32 1.64 7.20 3.96Z"/>
<circle cx="9.5" cy="9.5" r="3.4" stroke-width="1.7"/></g></svg>
<div style="left:1037.2px;top:538.17px;font-size:18.6px;line-height:18.6px;color:#000;letter-spacing:-0.518px;">Program</div>
<div style="left:1141.9px;top:538.46px;font-size:18px;line-height:18px;color:#000;width:489.1px;overflow:hidden;">Speichert die Installationselemente und zugehörigen Programmdateien</div>
<div style="left:27px;top:571.1px;width:27px;height:27px;background:#fff;border:2px solid #bdbdbd;box-sizing:border-box"></div>
<svg style="left:104px;top:577.1px;" width="8" height="15" viewBox="0 0 8 15"><path d="M0 0L8 7.5L0 15Z" fill="#666"/></svg>
<svg style="left:122.5px;top:572.6px;" width="18" height="22" viewBox="0 0 18 22"><rect x="1.35" y="1.15" width="14.4" height="19.7" fill="none" stroke="#0a7cff" stroke-width="1.5"/>
<path d="M13.9 20.85V14.7C13.9 13.7 14.5 13.1 15.6 13.1C16.7 13.1 17.3 13.7 17.3 14.7V20.85Z" fill="#fff" stroke="#0a7cff" stroke-width="1.4" stroke-linejoin="round"/></svg>
<div style="left:147px;top:575.48px;font-size:19px;line-height:19px;color:#000;">Huorong</div>
<div style="left:317.6px;top:575.72px;font-size:18.5px;line-height:18.5px;font-weight:700;color:#4a8fdb;letter-spacing:0.707px;">63.3 MB</div>
<div style="left:444.2px;top:575.72px;font-size:18.5px;line-height:18.5px;font-weight:700;color:#e8403a;letter-spacing:-0.551px;">DoNotClean</div>
<svg style="left:646px;top:576px;" width="19" height="19" viewBox="0 0 19 19"><path d="M1 1L18 18M18 1L1 18" stroke="#d9d9d9" stroke-width="1.6"/></svg>
<div style="left:701.2px;top:572.9px;width:141.6px;height:23.5px;background:#e9e9e9;border-radius:4px"></div>
<div style="left:850.5px;top:575.72px;font-size:18.5px;line-height:18.5px;font-weight:700;color:#000;letter-spacing:-0.673px;">0.0%</div>
<div style="left:922.5px;top:575.48px;font-size:19px;line-height:19px;color:#000;">99</div>
<svg style="left:1011.5px;top:575.8px;" width="19" height="19" viewBox="0 0 19 19"><g fill="none" stroke="#111" stroke-width="1.35" stroke-linejoin="round">
<path d="M7.20 3.96C6.90 0.99 12.10 0.99 11.80 3.96C13.68 1.64 17.36 5.32 15.04 7.20C18.01 6.90 18.01 12.10 15.04 11.80C17.36 13.68 13.68 17.36 11.80 15.04C12.10 18.01 6.90 18.01 7.20 15.04C5.32 17.36 1.64 13.68 3.96 11.80C0.99 12.10 0.99 6.90 3.96 7.20C1.64 5.32 5.32 1.64 7.20 3.96Z"/>
<circle cx="9.5" cy="9.5" r="3.4" stroke-width="1.7"/></g></svg>
<div style="left:1037.2px;top:575.67px;font-size:18.6px;line-height:18.6px;color:#000;letter-spacing:-0.518px;">Program</div>
<div style="left:1141.9px;top:575.96px;font-size:18px;line-height:18px;color:#000;width:489.1px;overflow:hidden;">Zum Speichern von Programmdateien und zugehörigen Komponenten</div>
<div style="left:20px;top:229px;width:1610px;height:2px;background:#e2e2e2"></div>
<div style="left:20px;top:263.5px;width:1610px;height:2px;background:#e2e2e2"></div>
<div style="left:20px;top:301px;width:1610px;height:2px;background:#e2e2e2"></div>
<div style="left:20px;top:338.5px;width:1610px;height:2px;background:#e2e2e2"></div>
<div style="left:20px;top:376px;width:1610px;height:2px;background:#e2e2e2"></div>
<div style="left:20px;top:413.5px;width:1610px;height:2px;background:#e2e2e2"></div>
<div style="left:20px;top:451px;width:1610px;height:2px;background:#e2e2e2"></div>
<div style="left:20px;top:488.5px;width:1610px;height:2px;background:#e2e2e2"></div>
<div style="left:20px;top:526px;width:1610px;height:2px;background:#e2e2e2"></div>
<div style="left:20px;top:563.5px;width:1610px;height:2px;background:#e2e2e2"></div>
<div style="left:20px;top:601px;width:1610px;height:2px;background:#e2e2e2"></div>
<div style="left:27px;top:608.5px;width:27px;height:2px;background:#d0d0d0"></div>
<svg style="left:1633px;top:203px;" width="17" height="9" viewBox="0 0 17 9"><path d="M0 9H17L8.5 0Z" fill="#9f9f9f"/></svg>
<div style="left:1633px;top:246px;width:17px;height:150.6px;background:#b8b8b8"></div>
<svg style="left:1632.5px;top:594px;" width="17" height="9" viewBox="0 0 17 9"><path d="M0 0H17L8.5 9Z" fill="#9f9f9f"/></svg>
<div style="left:18px;top:611px;width:1634px;height:20px;background:#fff"></div>
<svg style="left:26px;top:612px;" width="9" height="17" viewBox="0 0 9 17"><path d="M9 0V17L0 8.5Z" fill="#9f9f9f"/></svg>
<div style="left:42px;top:612px;width:1511.75px;height:17.6px;background:#b8b8b8"></div>
<svg style="left:1613.75px;top:612px;" width="9" height="17" viewBox="0 0 9 17"><path d="M0 0V17L9 8.5Z" fill="#9f9f9f"/></svg>
<div style="left:17px;top:646px;width:1636px;height:500px;border:1px solid #ababab;box-sizing:border-box;background:#fff"></div>
<div style="left:18px;top:647px;width:1634px;height:53.5px;background:#f7f7f7"></div>
<div style="left:18px;top:700.5px;width:1634px;height:2.5px;background:#b9b9b9"></div>
<div style="left:33px;top:655px;width:30px;height:38px;background:#fff;border:3px solid #000;box-sizing:border-box"></div>
<svg style="left:43.7px;top:667px;" width="9" height="15" viewBox="0 0 9 15"><path d="M4.6 0.4L8 5.2H6.3V14H2.9V5.2H1.2Z" fill="#000"/></svg>
<svg style="left:79px;top:666px;" width="23" height="19" viewBox="0 0 23 19"><g fill="none" stroke="#000" stroke-width="2" stroke-linejoin="round">
<path d="M2.2 16.8V3.5C2.2 2.6 2.8 2 3.7 2H8.3L10.6 4.4H17C17.9 4.4 18.5 5 18.5 5.9V7.6"/>
<path d="M2.6 16.9L5.6 9C5.9 8.2 6.5 7.8 7.3 7.8H20.2C21 7.8 21.5 8.5 21.2 9.3L18.6 16.2C18.4 16.8 17.9 17.1 17.2 17.1H3.6Z"/></g></svg>
<div style="left:108.8px;top:665.08px;font-size:19px;line-height:19px;font-weight:700;color:#000;letter-spacing:0.083px;">Ordnerinhalt:</div>
<div style="left:240.8px;top:665.08px;font-size:19px;line-height:19px;font-weight:700;color:#4a8fdb;letter-spacing:-0.145px;">C:\Program Files</div>
<div style="left:1516.3px;top:665.08px;font-size:19px;line-height:19px;color:#000;letter-spacing:0.092px;">Elemente:</div>
<div style="left:1614px;top:665.08px;font-size:19px;line-height:19px;font-weight:700;color:#4a8fdb;">45</div>
<div style="left:18px;top:703px;width:1612px;height:34.5px;background:#fff"></div>
<div style="left:18px;top:737.5px;width:1612px;height:3px;background:#c2c2c2"></div>
<div style="left:1629px;top:703px;width:1.5px;height:37px;background:#c8c8c8"></div>
<div style="left:1073.5px;top:703px;width:1.6px;height:34.5px;background:#cdcdcd"></div>
<div style="left:1223.5px;top:703px;width:1.6px;height:34.5px;background:#cdcdcd"></div>
<div style="left:1403.5px;top:703px;width:1.6px;height:34.5px;background:#cdcdcd"></div>
<div style="left:77.4px;top:710.62px;font-size:18.5px;line-height:18.5px;font-weight:700;color:#000;letter-spacing:1.290px;">NAME</div>
<div style="left:1090.6px;top:710.62px;font-size:18.5px;line-height:18.5px;font-weight:700;color:#000;letter-spacing:-0.710px;">GRÖßE</div>
<div style="left:1240.5px;top:710.62px;font-size:18.5px;line-height:18.5px;font-weight:700;color:#000;letter-spacing:-0.720px;">TYP</div>
<div style="left:1420.6px;top:710.62px;font-size:18.5px;line-height:18.5px;font-weight:700;color:#000;letter-spacing:0.420px;">ÄNDERUNGSDATUM</div>
<svg style="left:31.5px;top:747.7px;" width="18" height="22" viewBox="0 0 18 22"><rect x="1.35" y="1.15" width="14.4" height="19.7" fill="none" stroke="#ffd000" stroke-width="1.5"/>
<path d="M13.9 20.85V14.7C13.9 13.7 14.5 13.1 15.6 13.1C16.7 13.1 17.3 13.7 17.3 14.7V20.85Z" fill="#fff" stroke="#ffd000" stroke-width="1.4" stroke-linejoin="round"/></svg>
<div style="left:64px;top:749.08px;font-size:19px;line-height:19px;color:#000;">Adobe</div>
<div style="left:1076.5px;top:749.32px;font-size:18.5px;line-height:18.5px;font-weight:700;color:#4a8fdb;letter-spacing:0.277px;">18.3 GB</div>
<div style="left:1226px;top:749.08px;font-size:19px;line-height:19px;color:#000;">Ordner</div>
<div style="left:1406.5px;top:749.08px;font-size:19px;line-height:19px;color:#000;letter-spacing:-0.059px;">2025-12-02 20:50:34</div>
<div style="left:20px;top:775.8px;width:1610px;height:2px;background:#e2e2e2"></div>
<svg style="left:31.5px;top:785.2px;" width="18" height="22" viewBox="0 0 18 22"><rect x="1.35" y="1.15" width="14.4" height="19.7" fill="none" stroke="#ffd000" stroke-width="1.5"/>
<path d="M13.9 20.85V14.7C13.9 13.7 14.5 13.1 15.6 13.1C16.7 13.1 17.3 13.7 17.3 14.7V20.85Z" fill="#fff" stroke="#ffd000" stroke-width="1.4" stroke-linejoin="round"/></svg>
<div style="left:64px;top:786.58px;font-size:19px;line-height:19px;color:#000;">AMD</div>
<div style="left:1077.5px;top:786.82px;font-size:18.5px;line-height:18.5px;font-weight:700;color:#4a8fdb;letter-spacing:0.693px;">818.4 MB</div>
<div style="left:1226px;top:786.58px;font-size:19px;line-height:19px;color:#000;">Ordner</div>
<div style="left:1406.5px;top:786.58px;font-size:19px;line-height:19px;color:#000;letter-spacing:-0.003px;">2026-03-03 00:42:26</div>
<div style="left:20px;top:813.3px;width:1610px;height:2px;background:#e2e2e2"></div>
<svg style="left:31.5px;top:822.7px;" width="18" height="22" viewBox="0 0 18 22"><rect x="1.35" y="1.15" width="14.4" height="19.7" fill="none" stroke="#ffd000" stroke-width="1.5"/>
<path d="M13.9 20.85V14.7C13.9 13.7 14.5 13.1 15.6 13.1C16.7 13.1 17.3 13.7 17.3 14.7V20.85Z" fill="#fff" stroke="#ffd000" stroke-width="1.4" stroke-linejoin="round"/></svg>
<div style="left:64px;top:824.08px;font-size:19px;line-height:19px;color:#000;">AntiCheatExpert</div>
<div style="left:1076.5px;top:824.32px;font-size:18.5px;line-height:18.5px;font-weight:700;color:#4a8fdb;letter-spacing:0.982px;">116.9 MB</div>
<div style="left:1226px;top:824.08px;font-size:19px;line-height:19px;color:#000;">Ordner</div>
<div style="left:1406.5px;top:824.08px;font-size:19px;line-height:19px;color:#000;letter-spacing:-0.003px;">2026-02-08 03:48:01</div>
<div style="left:20px;top:850.8px;width:1610px;height:2px;background:#e2e2e2"></div>
<svg style="left:31.5px;top:860.2px;" width="18" height="22" viewBox="0 0 18 22"><rect x="1.35" y="1.15" width="14.4" height="19.7" fill="none" stroke="#ffd000" stroke-width="1.5"/>
<path d="M13.9 20.85V14.7C13.9 13.7 14.5 13.1 15.6 13.1C16.7 13.1 17.3 13.7 17.3 14.7V20.85Z" fill="#fff" stroke="#ffd000" stroke-width="1.4" stroke-linejoin="round"/></svg>
<div style="left:64px;top:861.58px;font-size:19px;line-height:19px;color:#000;">ASUS</div>
<div style="left:1077.5px;top:861.82px;font-size:18.5px;line-height:18.5px;font-weight:700;color:#4a8fdb;letter-spacing:0.707px;">30.7 MB</div>
<div style="left:1226px;top:861.58px;font-size:19px;line-height:19px;color:#000;">Ordner</div>
<div style="left:1406.5px;top:861.58px;font-size:19px;line-height:19px;color:#000;letter-spacing:0.075px;">2025-09-12 11:34:40</div>
<div style="left:20px;top:888.3px;width:1610px;height:2px;background:#e2e2e2"></div>
<svg style="left:31.5px;top:897.7px;" width="18" height="22" viewBox="0 0 18 22"><rect x="1.35" y="1.15" width="14.4" height="19.7" fill="none" stroke="#ffd000" stroke-width="1.5"/>
<path d="M13.9 20.85V14.7C13.9 13.7 14.5 13.1 15.6 13.1C16.7 13.1 17.3 13.7 17.3 14.7V20.85Z" fill="#fff" stroke="#ffd000" stroke-width="1.4" stroke-linejoin="round"/></svg>
<div style="left:63px;top:899.08px;font-size:19px;line-height:19px;color:#000;">Bandizip</div>
<div style="left:1077.5px;top:899.32px;font-size:18.5px;line-height:18.5px;font-weight:700;color:#4a8fdb;letter-spacing:0.843px;">22 MB</div>
<div style="left:1226px;top:899.08px;font-size:19px;line-height:19px;color:#000;">Ordner</div>
<div style="left:1406.5px;top:899.08px;font-size:19px;line-height:19px;color:#000;letter-spacing:-0.003px;">2025-10-20 04:23:47</div>
<div style="left:20px;top:925.8px;width:1610px;height:2px;background:#e2e2e2"></div>
<svg style="left:31.5px;top:935.2px;" width="18" height="22" viewBox="0 0 18 22"><rect x="1.35" y="1.15" width="14.4" height="19.7" fill="none" stroke="#ffd000" stroke-width="1.5"/>
<path d="M13.9 20.85V14.7C13.9 13.7 14.5 13.1 15.6 13.1C16.7 13.1 17.3 13.7 17.3 14.7V20.85Z" fill="#fff" stroke="#ffd000" stroke-width="1.4" stroke-linejoin="round"/></svg>
<div style="left:64px;top:936.58px;font-size:19px;line-height:19px;color:#000;">Cheat Engine</div>
<div style="left:1077.5px;top:936.82px;font-size:18.5px;line-height:18.5px;font-weight:700;color:#4a8fdb;letter-spacing:0.707px;">88.1 MB</div>
<div style="left:1226px;top:936.58px;font-size:19px;line-height:19px;color:#000;">Ordner</div>
<div style="left:1406.5px;top:936.58px;font-size:19px;line-height:19px;color:#000;letter-spacing:-0.003px;">2026-03-04 01:39:39</div>
<div style="left:20px;top:963.3px;width:1610px;height:2px;background:#e2e2e2"></div>
<svg style="left:31.5px;top:972.7px;" width="18" height="22" viewBox="0 0 18 22"><rect x="1.35" y="1.15" width="14.4" height="19.7" fill="none" stroke="#ffd000" stroke-width="1.5"/>
<path d="M13.9 20.85V14.7C13.9 13.7 14.5 13.1 15.6 13.1C16.7 13.1 17.3 13.7 17.3 14.7V20.85Z" fill="#fff" stroke="#ffd000" stroke-width="1.4" stroke-linejoin="round"/></svg>
<div style="left:64px;top:974.08px;font-size:19px;line-height:19px;color:#000;">Common Files</div>
<div style="left:1077.5px;top:974.32px;font-size:18.5px;line-height:18.5px;font-weight:700;color:#4a8fdb;letter-spacing:0.011px;">2.5 GB</div>
<div style="left:1226px;top:974.08px;font-size:19px;line-height:19px;color:#000;">Ordner</div>
<div style="left:1406.5px;top:974.08px;font-size:19px;line-height:19px;color:#000;letter-spacing:-0.003px;">2026-02-22 16:16:26</div>
<div style="left:20px;top:1000.8px;width:1610px;height:2px;background:#e2e2e2"></div>
<svg style="left:31.5px;top:1010.2px;" width="18" height="22" viewBox="0 0 18 22"><rect x="1.35" y="1.15" width="14.4" height="19.7" fill="none" stroke="#ffd000" stroke-width="1.5"/>
<path d="M13.9 20.85V14.7C13.9 13.7 14.5 13.1 15.6 13.1C16.7 13.1 17.3 13.7 17.3 14.7V20.85Z" fill="#fff" stroke="#ffd000" stroke-width="1.4" stroke-linejoin="round"/></svg>
<div style="left:63px;top:1011.58px;font-size:19px;line-height:19px;color:#000;">DAUM</div>
<div style="left:1076.5px;top:1011.82px;font-size:18.5px;line-height:18.5px;font-weight:700;color:#4a8fdb;letter-spacing:0.836px;">152.6 MB</div>
<div style="left:1226px;top:1011.58px;font-size:19px;line-height:19px;color:#000;">Ordner</div>
<div style="left:1406.5px;top:1011.58px;font-size:19px;line-height:19px;color:#000;letter-spacing:-0.003px;">2025-09-19 19:06:02</div>
<div style="left:20px;top:1038.3px;width:1610px;height:2px;background:#e2e2e2"></div>
<svg style="left:31.5px;top:1047.7px;" width="18" height="22" viewBox="0 0 18 22"><rect x="1.35" y="1.15" width="14.4" height="19.7" fill="none" stroke="#ffd000" stroke-width="1.5"/>
<path d="M13.9 20.85V14.7C13.9 13.7 14.5 13.1 15.6 13.1C16.7 13.1 17.3 13.7 17.3 14.7V20.85Z" fill="#fff" stroke="#ffd000" stroke-width="1.4" stroke-linejoin="round"/></svg>
<div style="left:64px;top:1049.08px;font-size:19px;line-height:19px;color:#000;">dotnet</div>
<div style="left:1076.5px;top:1049.32px;font-size:18.5px;line-height:18.5px;font-weight:700;color:#4a8fdb;letter-spacing:0.060px;">1 GB</div>
<div style="left:1226px;top:1049.08px;font-size:19px;line-height:19px;color:#000;">Ordner</div>
<div style="left:1406.5px;top:1049.08px;font-size:19px;line-height:19px;color:#000;letter-spacing:0.075px;">2025-09-29 11:20:19</div>
<div style="left:20px;top:1075.8px;width:1610px;height:2px;background:#e2e2e2"></div>
<svg style="left:31.5px;top:1085.2px;" width="18" height="22" viewBox="0 0 18 22"><rect x="1.35" y="1.15" width="14.4" height="19.7" fill="none" stroke="#ffd000" stroke-width="1.5"/>
<path d="M13.9 20.85V14.7C13.9 13.7 14.5 13.1 15.6 13.1C16.7 13.1 17.3 13.7 17.3 14.7V20.85Z" fill="#fff" stroke="#ffd000" stroke-width="1.4" stroke-linejoin="round"/></svg>
<div style="left:63px;top:1086.58px;font-size:19px;line-height:19px;color:#000;">ENE</div>
<div style="left:1077.5px;top:1086.82px;font-size:18.5px;line-height:18.5px;font-weight:700;color:#4a8fdb;letter-spacing:0.726px;">3.2 MB</div>
<div style="left:1226px;top:1086.58px;font-size:19px;line-height:19px;color:#000;">Ordner</div>
<div style="left:1406.5px;top:1086.58px;font-size:19px;line-height:19px;color:#000;letter-spacing:-0.059px;">2025-09-10 05:04:14</div>
<div style="left:20px;top:1113.3px;width:1610px;height:2px;background:#e2e2e2"></div>
<svg style="left:31.5px;top:1122.7px;" width="18" height="22" viewBox="0 0 18 22"><rect x="1.35" y="1.15" width="14.4" height="19.7" fill="none" stroke="#ffd000" stroke-width="1.5"/>
<path d="M13.9 20.85V14.7C13.9 13.7 14.5 13.1 15.6 13.1C16.7 13.1 17.3 13.7 17.3 14.7V20.85Z" fill="#fff" stroke="#ffd000" stroke-width="1.4" stroke-linejoin="round"/></svg>
<div style="left:64px;top:1124.08px;font-size:19px;line-height:19px;color:#000;">Git</div>
<div style="left:1077.5px;top:1124.32px;font-size:18.5px;line-height:18.5px;font-weight:700;color:#4a8fdb;letter-spacing:0.693px;">403.4 MB</div>
<div style="left:1226px;top:1124.08px;font-size:19px;line-height:19px;color:#000;">Ordner</div>
<div style="left:1406.5px;top:1124.08px;font-size:19px;line-height:19px;color:#000;letter-spacing:-0.003px;">2025-09-16 09:07:05</div>
<div style="left:17px;top:1145px;width:1636px;height:7px;background:#fff"></div>
<div style="left:17px;top:1145px;width:1636px;height:1px;background:#ababab"></div>
<svg style="left:1632.5px;top:749px;" width="17" height="9" viewBox="0 0 17 9"><path d="M0 9H17L8.5 0Z" fill="#9f9f9f"/></svg>
<div style="left:1632.5px;top:765.2px;width:17.5px;height:77.5px;background:#b8b8b8"></div>
<svg style="left:1632.5px;top:1128px;" width="17" height="9" viewBox="0 0 17 9"><path d="M0 0H17L8.5 9Z" fill="#9f9f9f"/></svg>
<div style="left:1675.5px;top:134.5px;width:558.5px;height:1011px;border:1px solid #ababab;box-sizing:border-box;background:#fff"></div>
<div style="left:1692px;top:154.34px;font-size:24.5px;line-height:24.5px;font-weight:700;color:#000;letter-spacing:0.571px;">Details &amp; Statistiken</div>
<div style="left:1692px;top:202.5px;width:503.6px;height:228px;background:#f7f7f7;border-radius:8px"></div>
<div style="left:1707px;top:221.32px;font-size:18.5px;line-height:18.5px;font-weight:700;color:#000;letter-spacing:0.122px;">Zusammenfassung</div>
<div style="left:1707px;top:259.07px;font-size:18.6px;line-height:18.6px;color:#000;letter-spacing:0.294px;">Gesamtelemente:</div>
<div style="left:1872px;top:259.07px;font-size:18.6px;line-height:18.6px;font-weight:700;color:#000;letter-spacing:0.326px;">1281</div>
<div style="left:1707px;top:289.07px;font-size:18.6px;line-height:18.6px;color:#000;">Ausgewählt:</div>
<div style="left:1873px;top:289.07px;font-size:18.6px;line-height:18.6px;font-weight:700;color:#4a8fdb;">Selected: 0 B</div>
<div style="left:1707px;top:319.57px;font-size:18.6px;line-height:18.6px;color:#000;">Status:</div>
<div style="left:1871.5px;top:319.57px;font-size:18.6px;line-height:18.6px;color:#000;letter-spacing:0.325px;">Datenbankabgleich abgeschlossen:</div>
<div style="left:1872.5px;top:342.57px;font-size:18.6px;line-height:18.6px;color:#000;">337/1281. Klicken Sie auf die Lupe,</div>
<div style="left:1871.5px;top:365.57px;font-size:18.6px;line-height:18.6px;color:#000;">um den KI-Scan zu starten.</div>
<div style="left:1707px;top:388.07px;font-size:18.6px;line-height:18.6px;color:#000;">Scannen:</div>
<svg style="left:1694px;top:455px;" width="21" height="20" viewBox="0 0 21 20"><rect x="0.8" y="0.8" width="19.4" height="18.4" rx="3" fill="#000"/>
<rect x="3" y="3" width="15" height="14" fill="#fff"/>
<rect x="4" y="9" width="3.5" height="8" fill="#000"/><rect x="8.8" y="4" width="3.5" height="13" fill="#000"/><rect x="13.6" y="11" width="3.5" height="6" fill="#000"/></svg>
<div style="left:1722px;top:456.18px;font-size:19px;line-height:19px;font-weight:700;color:#000;letter-spacing:0.322px;">Diagramme</div>
<div style="left:1692px;top:491.3px;width:503.6px;height:374.2px;background:#f7f7f7;border-radius:8px"></div>
<div style="left:1706.4px;top:509.07px;font-size:18.6px;line-height:18.6px;font-weight:700;color:#000;letter-spacing:0.217px;">Program Files - Subfolders Distribution</div>
<svg style="left:0;top:0" width="2250" height="1200"><path d="M1831 694.5L1925.00 694.50A94 94 0 0 1 1772.22 767.86Z" fill="#ff6384"/><path d="M1831 694.5L1772.22 767.86A94 94 0 0 1 1799.75 605.85Z" fill="#36a2eb"/><path d="M1831 694.5L1799.75 605.85A94 94 0 0 1 1877.05 612.55Z" fill="#ffcd56"/><path d="M1831 694.5L1877.05 612.55A94 94 0 0 1 1917.76 658.32Z" fill="#4bc0c0"/><path d="M1831 694.5L1917.76 658.32A94 94 0 0 1 1924.08 681.40Z" fill="#9966ff"/><path d="M1831 694.5L1924.08 681.40A94 94 0 0 1 1925.00 694.50Z" fill="#ff9f40"/></svg>
<div style="left:1739.21px;top:676.34px;font-size:17px;line-height:17px;color:#fff;">12.5 GB</div>
<div style="left:1826.31px;top:741.44px;font-size:17px;line-height:17px;color:#fff;">13.2 GB</div>
<div style="left:1816.13px;top:625.04px;font-size:17px;line-height:17px;color:#fff;">5 GB</div>
<div style="left:1850.24px;top:645.14px;font-size:17px;line-height:17px;color:#fff;">3.9 GB</div>
<div style="left:1863.14px;top:669.84px;font-size:17px;line-height:17px;color:#fff;">1.5 GB</div>
<div style="left:1855.92px;top:682.24px;font-size:17px;line-height:17px;color:#fff;">821.8 MB</div>
<div style="left:1995.9px;top:593px;width:18px;height:18px;background:#ff6384;border-radius:50%"></div>
<div style="left:2026.6px;top:594.32px;font-size:16px;line-height:16px;color:#222;">Adobe</div>
<div style="left:1995.9px;top:629.5px;width:18px;height:18px;background:#36a2eb;border-radius:50%"></div>
<div style="left:2026.6px;top:630.82px;font-size:16px;line-height:16px;color:#222;">Tencent</div>
<div style="left:1995.9px;top:666.8px;width:18px;height:18px;background:#ffcd56;border-radius:50%"></div>
<div style="left:2026.6px;top:668.12px;font-size:16px;line-height:16px;color:#222;">WindowsApps</div>
<div style="left:1995.9px;top:705.2px;width:18px;height:18px;background:#4bc0c0;border-radius:50%"></div>
<div style="left:2023.6px;top:706.52px;font-size:16px;line-height:16px;color:#222;letter-spacing:0.364px;">Microsoft Office</div>
<div style="left:1995.9px;top:741px;width:18px;height:18px;background:#9966ff;border-radius:50%"></div>
<div style="left:2026.6px;top:742.32px;font-size:16px;line-height:16px;color:#222;">Common Files</div>
<div style="left:1995.9px;top:777px;width:18px;height:18px;background:#ff9f40;border-radius:50%"></div>
<div style="left:2026.6px;top:778.32px;font-size:16px;line-height:16px;color:#222;">AMD</div>
<div style="left:1692px;top:888.75px;width:503.6px;height:228.75px;background:#f7f7f7;border-radius:8px"></div>
<div style="left:1707.5px;top:906.64px;font-size:19.5px;line-height:19.5px;font-weight:700;color:#000;letter-spacing:-0.026px;">Top 6 größte Ordner</div>
<div style="left:1706.5px;top:945.6px;font-size:17.5px;line-height:17.5px;color:#000;">1. Adobe - 13.2 GB</div>
<div style="left:1707.5px;top:973.1px;font-size:17.5px;line-height:17.5px;color:#000;">2. Tencent - 12.5 GB</div>
<div style="left:1707.5px;top:1000.1px;font-size:17.5px;line-height:17.5px;color:#000;">3. WindowsApps - 5 GB</div>
<div style="left:1707.5px;top:1027.1px;font-size:17.5px;line-height:17.5px;color:#000;letter-spacing:0.091px;">4. Microsoft Office - 3.9 GB</div>
<div style="left:1707.5px;top:1054.6px;font-size:17.5px;line-height:17.5px;color:#000;">5. Common Files - 1.5 GB</div>
<div style="left:1707.5px;top:1081.1px;font-size:17.5px;line-height:17.5px;color:#000;">6. AMD - 821.8 MB</div>
<svg style="left:2213.25px;top:144px;" width="17" height="9" viewBox="0 0 17 9"><path d="M0 9H17L8.5 0Z" fill="#9f9f9f"/></svg>
<div style="left:2213px;top:160px;width:18px;height:946.5px;background:#b8b8b8"></div>
<svg style="left:2213.25px;top:1127.8px;" width="17" height="9" viewBox="0 0 17 9"><path d="M0 0H17L8.5 9Z" fill="#9f9f9f"/></svg>
<div style="left:2px;top:1152px;width:2246px;height:1px;background:#c4c4c4"></div>
<div style="left:2px;top:1153px;width:2246px;height:45px;background:#f7f7f7"></div>
<div style="left:16.3px;top:1166.88px;font-size:19px;line-height:19px;color:#000;letter-spacing:0.046px;">Datenbankabgleich abgeschlossen: 337/1281. Klicken Sie auf die Lupe, um den KI-Scan zu starten.</div>
<div style="left:2058px;top:1166.88px;font-size:19px;line-height:19px;font-weight:700;color:#000;letter-spacing:-0.300px;">Selected: 0 B</div>
</body></html>
